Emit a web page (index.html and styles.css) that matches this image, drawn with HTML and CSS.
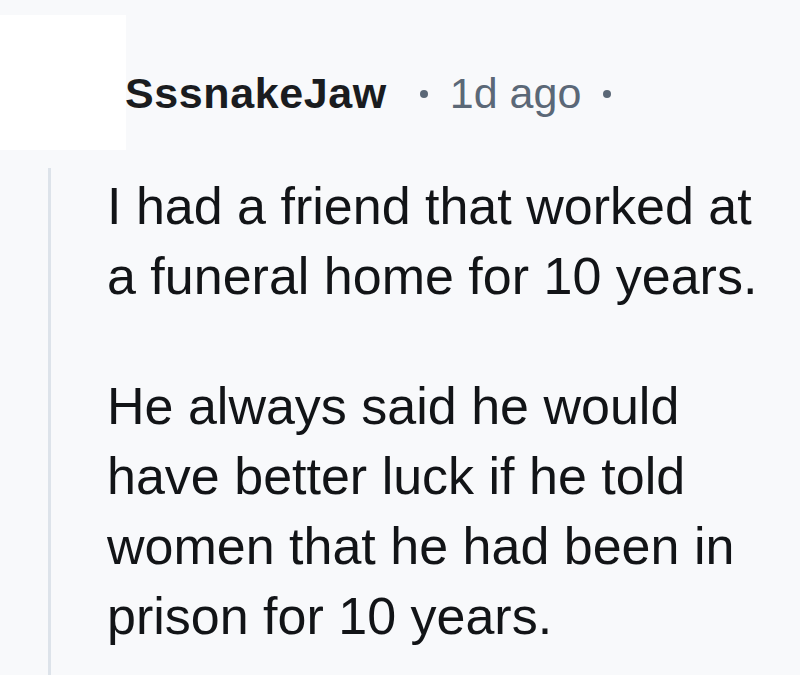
FILE: index.html
```html
<!DOCTYPE html>
<html>
<head>
<meta charset="utf-8">
<link rel="stylesheet" href="styles.css">
</head>
<body>
<div class="comment">
  <div class="header">
    <div class="avatar-slot"></div>
    <div class="meta">
      <span class="author">SssnakeJaw</span>
      <span class="dot dot-first"></span>
      <span class="time">1d ago</span>
      <span class="dot dot-last"></span>
    </div>
  </div>
  <div class="thread">
    <div class="body">
      <p>I had a friend that worked at a funeral home for 10 years.</p>
      <p>He always said he would have better luck if he told women that he had been in prison for 10 years.</p>
    </div>
  </div>
</div>
</body>
</html>
```
FILE: styles.css
```css
html, body {
  margin: 0;
  padding: 0;
  background: #f8f9fb;
  width: 800px;
  height: 675px;
  overflow: hidden;
}
.comment {
  font-family: "Liberation Sans", Arial, sans-serif;
  padding-top: 15px;
}
.header {
  display: flex;
  align-items: flex-start;
  height: 135px;
}
.avatar-slot {
  width: 126px;
  height: 135px;
  background: #ffffff;
  flex: none;
}
.meta {
  display: flex;
  align-items: baseline;
  margin-top: 54px;
  margin-left: -1px;
  line-height: 48px;
}
.author {
  font-weight: bold;
  font-size: 43px;
  letter-spacing: 0.6px;
  color: #1a1c1f;
}
.dot {
  align-self: flex-start;
  width: 8px;
  height: 8px;
  border-radius: 50%;
  background: #5b6877;
  margin-top: 21px;
  flex: none;
}
.dot-first {
  margin-left: 33px;
  margin-right: 22px;
}
.dot-last {
  margin-left: 22px;
}
.time {
  font-size: 43px;
  color: #5b6877;
}
.thread {
  margin-top: 18px;
  margin-left: 48px;
  border-left: 3px solid #dde3ea;
  height: 507px;
}
.body {
  margin-left: 56px;
  padding-top: 3px;
  width: 680px;
  font-size: 52px;
  line-height: 70px;
  color: #121417;
}
.body p {
  margin: 0 0 60px 0;
}
```
